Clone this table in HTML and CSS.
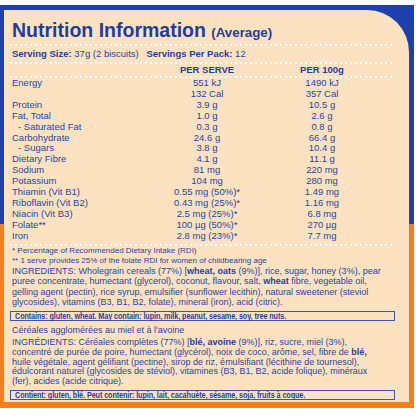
FILE: index.html
```html
<!DOCTYPE html>
<html lang="en">
<head>
    <meta charset="UTF-8">
    <title>Nutrition Information</title>
    <link rel="stylesheet" href="styles.css">
</head>
<body>
<div class="label">
    <div class="panel">
        <h1 class="title">Nutrition Information <span class="avg">(Average)</span></h1>
        <div class="dots"></div>
        <p class="serving"><b>Serving Size:</b> 37g (2 biscuits) <b class="pack">Servings Per Pack:</b> 12</p>
        <div class="dots"></div>
        <div class="facts head">
            <span></span><span class="num">PER SERVE</span><span class="num">PER 100g</span>
        </div>
        <div class="dots"></div>
        <div class="facts">
            <span>Energy</span><span class="num">551 kJ</span><span class="num">1490 kJ</span>
            <span></span><span class="num">132 Cal</span><span class="num">357 Cal</span>
            <span>Protein</span><span class="num">3.9 g</span><span class="num">10.5 g</span>
            <span>Fat, Total</span><span class="num">1.0 g</span><span class="num">2.6 g</span>
            <span class="sub">- Saturated Fat</span><span class="num">0.3 g</span><span class="num">0.8 g</span>
            <span>Carbohydrate</span><span class="num">24.6 g</span><span class="num">66.4 g</span>
            <span class="sub">- Sugars</span><span class="num">3.8 g</span><span class="num">10.4 g</span>
            <span>Dietary Fibre</span><span class="num">4.1 g</span><span class="num">11.1 g</span>
            <span>Sodium</span><span class="num">81 mg</span><span class="num">220 mg</span>
            <span>Potassium</span><span class="num">104 mg</span><span class="num">280 mg</span>
            <span>Thiamin (Vit B1)</span><span class="num">0.55 mg (50%)*</span><span class="num">1.49 mg</span>
            <span>Riboflavin (Vit B2)</span><span class="num">0.43 mg (25%)*</span><span class="num">1.16 mg</span>
            <span>Niacin (Vit B3)</span><span class="num">2.5 mg (25%)*</span><span class="num">6.8 mg</span>
            <span>Folate**</span><span class="num">100 µg (50%)*</span><span class="num">270 µg</span>
            <span>Iron</span><span class="num">2.8 mg (23%)*</span><span class="num">7.7 mg</span>
        </div>
        <div class="dots end"></div>
        <p class="note">* Percentage of Recommended Dietary Intake (RDI)<br>** 1 serve provides 25% of the folate RDI for women of childbearing age</p>
        <p class="ingr">INGREDIENTS: Wholegrain cereals (77%) [<b>wheat, oats</b> (9%)], rice, sugar, honey (3%), pear<br>puree concentrate, humectant (glycerol), coconut, flavour, salt, <b>wheat</b> fibre, vegetable oil,<br>gelling agent (pectin), rice syrup, emulsifier (sunflower lecithin), natural sweetener (steviol<br>glycosides), vitamins (B3, B1, B2, folate), mineral (iron), acid (citric).</p>
        <div class="allergy"><span class="allergy-text">Contains: gluten, wheat. May contain: lupin, milk, peanut, sesame, soy, tree nuts.</span></div>
        <p class="ingr fr-name">Céréales agglomérées au miel et à l'avoine</p>
        <p class="ingr fr">INGRÉDIENTS: Céréales complètes (77%) [<b>blé, avoine</b> (9%)], riz, sucre, miel (3%),<br>concentré de purée de poire, humectant (glycérol), noix de coco, arôme, sel, fibre de <b>blé,</b><br>huile végétale, agent gélifiant (pectine), sirop de riz, émulsifiant (lécithine de tournesol),<br>édulcorant naturel (glycosides de stéviol), vitamines (B3, B1, B2, acide folique), minéraux<br>(fer), acides (acide citrique).</p>
        <div class="allergy"><span class="allergy-text">Contient: gluten, blé. Peut contenir: lupin, lait, cacahuète, sésame, soja, fruits à coque.</span></div>
    </div>
</div>
</body>
</html>
```

FILE: styles.css
```css
body{
    margin: 0;
    background: #ffffff;
    font-family: "Liberation Sans", Arial, sans-serif;
    color: #2643a3;
}
.label{
    margin-top: 5px;
    width: 414px;
    height: 403px;
    box-sizing: border-box;
    padding: 5px 5px 6px 4px;
    background: linear-gradient(#1e40aa 0, #1e40aa 219px, #f47d1c 219px);
}
.panel{
    height: 100%;
    box-sizing: border-box;
    background: #fde2c2;
    border-top-right-radius: 42px;
    padding: 9px 14px 0 8px;
}
.title{
    margin: 0;
    font-size: 19.5px;
    line-height: 22px;
    color: #1f3d9f;
    white-space: nowrap;
}
.avg{
    font-size: 13.3px;
}
.dots{
    height: 2px;
    margin-left: -2px;
    background: linear-gradient(to right, #ffffff 2px, transparent 2px) 0 0 / 5px 2px repeat-x;
}
.dots.end{
    margin-top: 2.5px;
}
.serving{
    margin: 0;
    font-size: 9.5px;
    line-height: 16px;
    white-space: nowrap;
}
.serving b{
    color: #1f3d9f;
}
.pack{
    margin-left: 5px;
}
.facts{
    display: grid;
    grid-template-columns: 140px 110px 120px;
    font-size: 9.5px;
    line-height: 10.9px;
    white-space: nowrap;
}
.facts.head{
    line-height: 12px;
    font-weight: bold;
    color: #1f3d9f;
}
.num{
    text-align: center;
}
.sub{
    padding-left: 6px;
}
.note{
    margin: 0;
    font-size: 8px;
    line-height: 10px;
    white-space: nowrap;
}
.ingr{
    margin: 0;
    font-size: 9px;
    line-height: 10.2px;
    white-space: nowrap;
}
.ingr b{
    color: #1f3d9f;
}
.fr-name{
    margin-top: 4px;
}
.fr{
    margin-top: 3px;
    line-height: 9.7px;
}
.allergy{
    display: flex;
    align-items: center;
    margin: 4px 0 0 -2px;
    border: 1px solid #3b56ad;
    padding: 0 4px;
    height: 8px;
    white-space: nowrap;
    color: #1f3d9f;
}
.allergy-text{
    font-weight: bold;
    font-size: 8.5px;
    line-height: 8px;
    letter-spacing: -0.1px;
    transform: scaleX(0.85);
    transform-origin: left center;
}
.fr + .allergy{
    margin-top: 3px;
}
```
